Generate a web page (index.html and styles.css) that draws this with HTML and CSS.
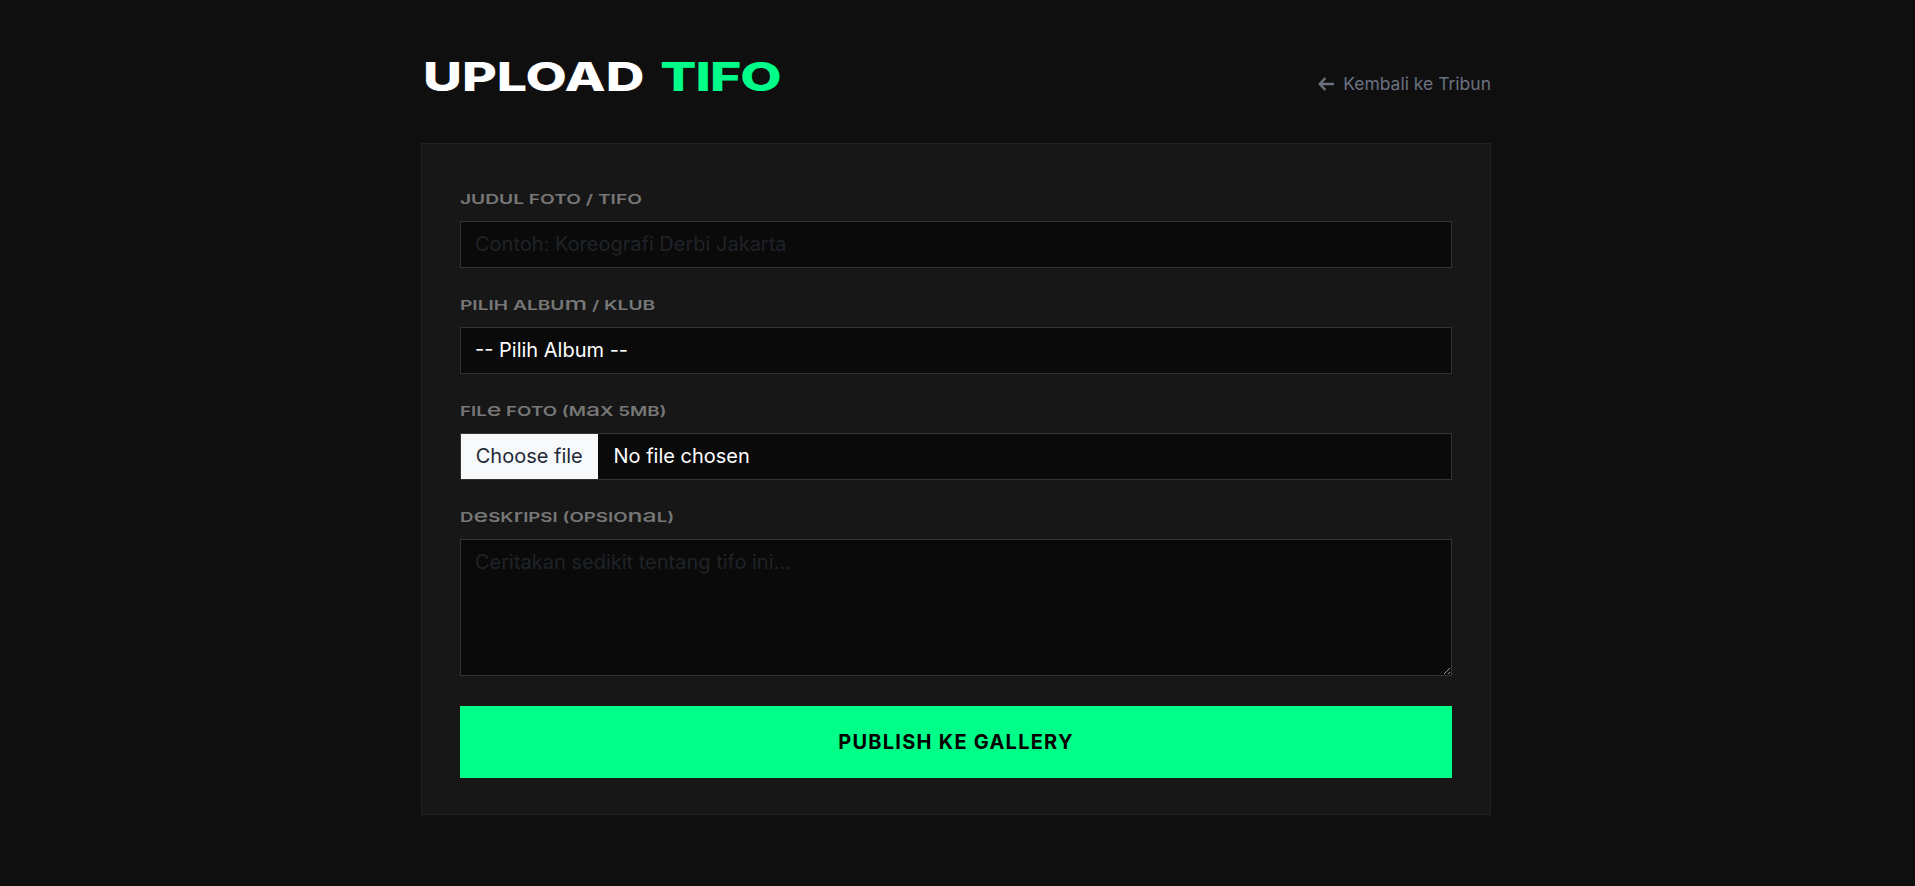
FILE: index.html
```html
<!DOCTYPE html>
<html lang="id">
<head>
<meta charset="utf-8">
<title>Upload Tifo</title>
<link rel="stylesheet" href="styles.css">
</head>
<body>
<main class="page">
  <header class="head">
    <h1 class="title"><span class="title-inner">UPLOAD <span class="accent">TIFO</span></span></h1>
    <a class="back" href="#">
      <svg class="back-icon" viewBox="0 0 16 14" aria-hidden="true"><path d="M7.4 1 1.8 7l5.6 6M2 7h14" fill="none" stroke="currentColor" stroke-width="2.4"/></svg>
      <span>Kembali ke Tribun</span>
    </a>
  </header>
  <form class="card">
    <div class="field">
      <label class="label" for="judul">JUDUL FOTO / TIFO</label>
      <input class="control" id="judul" type="text" placeholder="Contoh: Koreografi Derbi Jakarta">
    </div>
    <div class="field">
      <label class="label" for="album">PILIH ALBU<span class="lc">m</span> / KLUB</label>
      <select class="control select" id="album"><option>-- Pilih Album --</option></select>
    </div>
    <div class="field">
      <span class="label label-tight">FIL<span class="lc">e</span> FOTO (M<span class="lc">a</span>X 5MB)</span>
      <div class="control file">
        <label class="file-btn" for="file">Choose file</label>
        <span class="file-name">No file chosen</span>
        <input class="file-input" id="file" type="file">
      </div>
    </div>
    <div class="field field-last">
      <label class="label label-tight" for="desk">D<span class="lc">e</span>SK<span class="lc">r</span>IPSI (OPSIO<span class="lc">na</span>L)</label>
      <textarea class="control area" id="desk" placeholder="Ceritakan sedikit tentang tifo ini..."></textarea>
    </div>
    <button class="submit" type="button">PUBLISH KE GALLERY</button>
  </form>
</main>
</body>
</html>
```
FILE: styles.css
```css
* { box-sizing: border-box; }
html, body { margin: 0; height: 100%; }
body {
  background: #0f0f0f;
  font-family: Inter, "Liberation Sans", sans-serif;
  color: #fff;
  overflow: hidden;
  padding-right: 3px;
}
.page { width: 1070px; margin: 0 auto; padding-top: 50px; }
.head { display: flex; justify-content: space-between; align-items: flex-end; height: 93px; padding-bottom: 40px; }
.title { margin: 0; font-size: 40px; line-height: 53px; font-weight: 800; white-space: nowrap; }
.title-inner { display: inline-block; transform: scaleX(1.339); transform-origin: left center; margin-left: 2px; word-spacing: 3px; }
.accent { color: #00ff88; letter-spacing: -0.7px; }
.back { display: flex; align-items: center; gap: 9px; color: #6b7280; font-size: 17.5px; line-height: 25px; text-decoration: none; margin-bottom: 7px; }
.back-icon { width: 16px; height: 14px; }
.card { background: #171717; border: 1px solid #222; padding: 45px 38px 37px; height: 672px; }
.field { margin-bottom: 27.5px; }
.field-last { margin-bottom: 29.5px; }
.label { display: block; width: max-content; font-size: 13.5px; line-height: 20px; height: 20px; font-weight: 600; color: #777; margin-bottom: 12px; transform: scaleX(1.42); transform-origin: left center; }
.label-tight { transform: scaleX(1.385); }
.lc { font-size: 18px; line-height: 0; font-weight: 500; }
.control { display: block; width: 100%; height: 46.5px; background: #0a0a0a; border: 1px solid #333; border-radius: 0; color: #fff; font-family: inherit; font-size: 20px; padding: 0 14px; outline: none; margin: 0; }
.control::placeholder { color: #1f2328; opacity: 1; }
.select { appearance: none; }
.file { display: flex; align-items: stretch; padding: 0; position: relative; }
.file-btn { display: flex; align-items: center; justify-content: center; width: 136.5px; background: #f8f9fb; color: #1f2937; }
.file-name { display: flex; align-items: center; margin-left: 16px; }
.file-input { position: absolute; width: 1px; height: 1px; opacity: 0; }
.area { height: 137px; padding-top: 10px; resize: vertical; color-scheme: dark; }
.submit { display: block; width: 100%; height: 72px; background: #00ff88; border: 0; color: #000; font-family: inherit; font-size: 20px; font-weight: 700; letter-spacing: 1.25px; }
```
